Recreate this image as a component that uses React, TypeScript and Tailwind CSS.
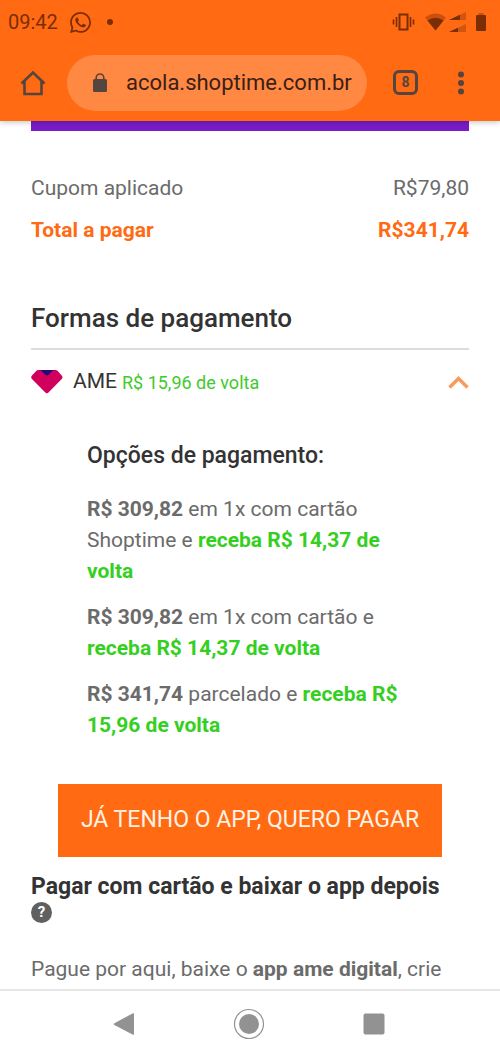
import { useState } from 'react';

const options = [
  { price: 'R$ 309,82', text: 'em 1x com cartão Shoptime e', cashback: 'receba R$ 14,37 de volta' },
  { price: 'R$ 309,82', text: 'em 1x com cartão e', cashback: 'receba R$ 14,37 de volta' },
  { price: 'R$ 341,74', text: 'parcelado e', cashback: 'receba R$ 15,96 de volta' },
];

export default function App() {
  const [open, setOpen] = useState(true);

  return (
    <div className="h-screen flex flex-col bg-white font-['Roboto',sans-serif] text-[21px] text-[#6b6b6b]">
      <header className="relative z-10 shrink-0 bg-[#ff6a13] shadow-[0_1px_6px_rgba(0,0,0,0.25)]">
        <StatusBar />
        <BrowserBar />
      </header>

      <main className="flex-1 min-h-0 overflow-hidden px-[31px]">
        <div className="h-[10px] bg-[#7a1bc8]" />

        <dl className="mt-9 leading-[42px]">
          <div className="flex justify-between">
            <dt>Cupom aplicado</dt>
            <dd>R$79,80</dd>
          </div>
          <div className="flex justify-between font-bold text-[#ff6a13]">
            <dt>Total a pagar</dt>
            <dd>R$341,74</dd>
          </div>
        </dl>

        <section className="mt-[50px]">
          <h2 className="h-[49px] border-b-2 border-[#dcdcdc] text-[26px] leading-[34px] font-medium text-[#333]">Formas de pagamento</h2>

          <button type="button" aria-expanded={open} onClick={() => setOpen(!open)} className="w-full h-16 flex items-center text-left">
            <AmeLogo />
            <span className="ml-[10px] text-[#333]">AME</span>
            <span className="ml-[5px] text-[18px] text-[#3fca2d]">R$ 15,96 de volta</span>
            <svg className="ml-auto" width="21" height="14" viewBox="0 0 21 14" fill="none" stroke="#fa9a5e" strokeWidth="3.500">
              <path d="M1.500 12.500 10.500 3.500l9 9" />
            </svg>
          </button>

          {open && (
            <div className="px-14 pt-6">
              <h3 className="text-[23px] leading-[36px] font-medium text-[#333]">Opções de pagamento:</h3>
              <div className="mt-5 space-y-[15px] leading-[31px]">
                {options.map((o, i) => (
                  <p key={i}>
                    <b>{o.price}</b> {o.text} <b className="text-[#35cf22]">{o.cashback}</b>
                  </p>
                ))}
              </div>
            </div>
          )}
        </section>

        <div className="mt-[43px] px-[27px]">
          <button type="button" className="w-full h-[73px] bg-[#ff6a13] text-[23px] text-[#fff3e6] whitespace-nowrap">JÁ TENHO O APP, QUERO PAGAR</button>
        </div>

        <h3 className="mt-[14px] text-[23px] leading-[31px] font-bold text-[#333]">Pagar com cartão e baixar o app depois</h3>
        <button type="button" aria-label="Ajuda" className="block size-[21px] rounded-full bg-[#606060] text-[15px] leading-[21px] font-bold text-white">?</button>
        <p className="mt-[31px] leading-[31px]">
          Pague por aqui, baixe o <b>app ame digital</b>, crie
        </p>
      </main>

      <nav className="relative shrink-0 h-[67px] flex items-center justify-between pl-[113px] pr-[115px] border-t-2 border-[#e6e6e6] bg-white">
        <button type="button" aria-label="Voltar">
          <svg width="22" height="24" viewBox="0 0 22 24" fill="#929292"><path d="M20 1.200 1.400 11.200a1 1 0 0 0 0 1.700L20 22.800a.8.8 0 0 0 1-.8V2a.8.8 0 0 0-1-.8z" /></svg>
        </button>
        <button type="button" aria-label="Início">
          <svg width="32" height="32" viewBox="0 0 32 32"><circle cx="16" cy="16" r="14.500" fill="none" stroke="#929292" strokeWidth="1.200" /><circle cx="16" cy="16" r="10" fill="#929292" /></svg>
        </button>
        <button type="button" aria-label="Recentes">
          <svg width="22" height="22" viewBox="0 0 22 22" fill="#929292"><rect x="0.500" y="0.500" width="21" height="21" rx="2" /></svg>
        </button>
      </nav>
    </div>
  );
}

function StatusBar() {
  return (
    <div className="h-11 flex items-center pl-2 pr-[14px] text-[20px] text-[#7b2d05]">
      <span>09:42</span>
      <svg className="ml-3" width="21" height="21" viewBox="0 0 24 24" fill="currentColor">
        <path d="M17.472 14.382c-.297-.149-1.758-.867-2.03-.967-.273-.099-.471-.148-.67.15-.197.297-.767.966-.94 1.164-.173.199-.347.223-.644.075-.297-.15-1.255-.463-2.39-1.475-.883-.788-1.48-1.761-1.653-2.059-.173-.297-.018-.458.13-.606.134-.133.298-.347.446-.52.149-.174.198-.298.298-.497.099-.198.05-.371-.025-.52-.075-.149-.669-1.612-.916-2.207-.242-.579-.487-.5-.669-.51-.173-.008-.371-.01-.57-.01-.198 0-.52.074-.792.372-.272.297-1.04 1.016-1.04 2.479 0 1.462 1.065 2.875 1.213 3.074.149.198 2.096 3.2 5.077 4.487.709.306 1.262.489 1.694.625.712.227 1.36.195 1.871.118.571-.085 1.758-.719 2.006-1.413.248-.694.248-1.289.173-1.413-.074-.124-.272-.198-.57-.347m-5.421 7.403h-.004a9.87 9.87 0 01-5.031-1.378l-.361-.214-3.741.982.998-3.648-.235-.374a9.86 9.86 0 01-1.51-5.26c.001-5.45 4.436-9.884 9.888-9.884 2.64 0 5.122 1.03 6.988 2.898a9.825 9.825 0 012.893 6.994c-.003 5.45-4.437 9.884-9.885 9.884m8.413-18.297A11.815 11.815 0 0012.05 0C5.495 0 .16 5.335.157 11.892c0 2.096.547 4.142 1.588 5.945L.057 24l6.305-1.654a11.882 11.882 0 005.683 1.448h.005c6.554 0 11.89-5.335 11.893-11.893a11.821 11.821 0 00-3.48-8.413z" />
      </svg>
      <span className="ml-4 size-[6px] rounded-full bg-[#7b2d05]" />

      <svg className="ml-auto" width="24" height="18" viewBox="0 0 24 18" fill="none" stroke="currentColor">
        <rect x="7.500" y="1.500" width="8" height="15" strokeWidth="2" />
        <path d="M4.500 4v10M1.500 6.500v5M18.500 4v10M21.500 6.500v5" strokeWidth="1.600" />
      </svg>
      <svg className="ml-[9px]" width="21" height="18" viewBox="0 0 21 18" fill="currentColor">
        <path d="M0 4.500Q10.500-3.500 21 4.500L10.500 17.500z" opacity=".4" />
        <path d="M2.500 7.500Q10.500 2 18.500 7.500L10.500 17.500z" />
      </svg>
      <svg className="ml-[3px]" width="17" height="20" viewBox="0 0 17 20" fill="currentColor">
        <path d="M0 8 17 0v8zM0 20l17-8v8z" opacity=".35" />
        <path d="M0 8 11 2.800V8zM0 20l9-4.200V20z" />
      </svg>
      <svg className="ml-[10px]" width="10" height="18" viewBox="0 0 10 18" fill="currentColor">
        <path d="M2.500 0h5v3h-5z" opacity=".4" />
        <rect y="2" width="10" height="16" rx="1" />
      </svg>
    </div>
  );
}

function BrowserBar() {
  return (
    <div className="h-[77px] flex items-center pl-5 pr-[35px] text-[#54453f]">
      <button type="button" aria-label="Página inicial">
        <svg width="26" height="26" viewBox="0 0 26 26" fill="none" stroke="currentColor" strokeWidth="2.600">
          <path d="M1.500 13.500 13 2.500l11.500 11M4.500 11v13h17V11" />
        </svg>
      </button>
      <div className="ml-[21px] flex-1 min-w-0 h-14 flex items-center rounded-full bg-[#ff8843] pl-[26px] pr-3">
        <svg className="shrink-0" width="14" height="19" viewBox="0 0 14 19">
          <rect y="6" width="14" height="13" rx="1.500" fill="#54453f" />
          <path d="M3.200 7V4.800a3.800 3.800 0 0 1 7.600 0V7" fill="none" stroke="#54453f" strokeWidth="1.600" />
        </svg>
        <input type="text" aria-label="Endereço" defaultValue="acola.shoptime.com.br" className="ml-[19px] h-full min-w-0 flex-1 bg-transparent text-[22px] text-[#3a2016] outline-none" />
      </div>
      <button type="button" aria-label="Guias abertas" className="ml-[26px] size-[25px] rounded-[6px] border-[3px] border-[#54453f] text-[14px] leading-[19px] font-bold">8</button>
      <button type="button" aria-label="Mais opções" className="ml-[39px]">
        <svg width="8" height="24" viewBox="0 0 8 24" fill="currentColor">
          <circle cx="4" cy="3.500" r="3" /><circle cx="4" cy="12" r="3" /><circle cx="4" cy="20.500" r="3" />
        </svg>
      </button>
    </div>
  );
}

function AmeLogo() {
  return (
    <svg width="32" height="24" viewBox="0 0 32 24">
      <path d="M7.500 0h17a3 3 0 0 1 2 .8l4 4.400a2.800 2.800 0 0 1 0 4L17.500 22.400a2.300 2.300 0 0 1-3.200 0L1.200 9.200a2.800 2.800 0 0 1 0-4l4.200-4.400a3 3 0 0 1 2.100-.8z" fill="#d1005d" />
      <path d="M9.500 0h13l-4.600 4.600a2.600 2.600 0 0 1-3.800 0z" fill="#250a78" />
    </svg>
  );
}
